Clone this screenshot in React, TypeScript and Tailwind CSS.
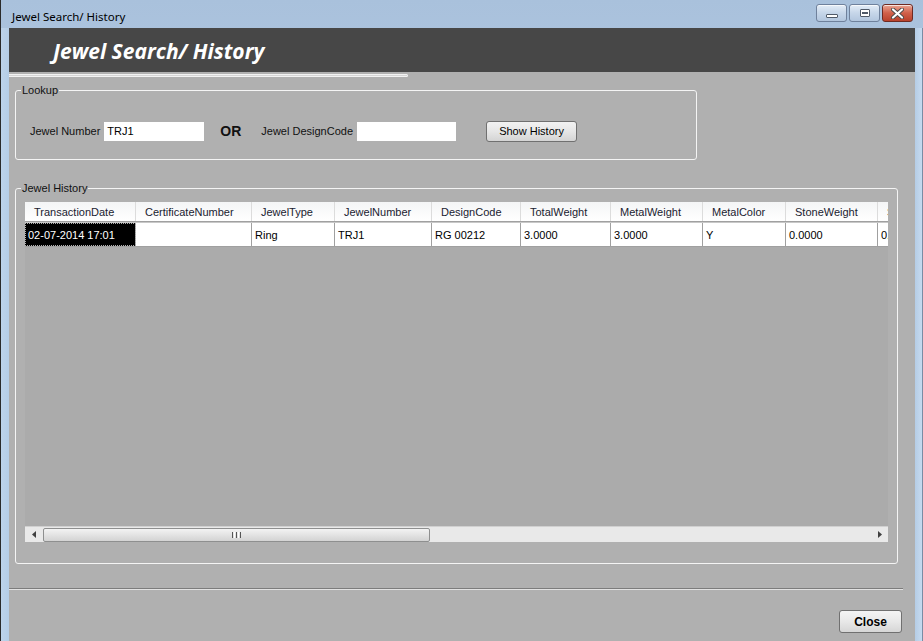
import React from "react";

const cols = [
  { name: "TransactionDate", w: 111, val: "02-07-2014 17:01" },
  { name: "CertificateNumber", w: 116, val: "" },
  { name: "JewelType", w: 83, val: "Ring" },
  { name: "JewelNumber", w: 97, val: "TRJ1" },
  { name: "DesignCode", w: 89, val: "RG 00212" },
  { name: "TotalWeight", w: 90, val: "3.0000" },
  { name: "MetalWeight", w: 92, val: "3.0000" },
  { name: "MetalColor", w: 83, val: "Y" },
  { name: "StoneWeight", w: 92, val: "0.0000" },
  { name: "StoneValue", w: 60, val: "0.0000" },
];

function CaptionButton({ kind }: { kind: "min" | "max" | "close" }) {
  const base =
    "h-[18px] flex items-center justify-center rounded-[3px] border shadow-[inset_0_1px_0_rgba(255,255,255,0.7)]";
  if (kind === "close") {
    return (
      <div className={`${base} w-[31px] border-[#6e2a22] bg-gradient-to-b from-[#e8a493] via-[#d0604a] to-[#b9412c]`}>
        <svg width="13" height="11" viewBox="0 0 13 11">
          <path d="M2 1.5 L11 9.5 M11 1.5 L2 9.5" stroke="#4a4a4a" strokeWidth="4" strokeLinecap="round" />
          <path d="M2 1.5 L11 9.5 M11 1.5 L2 9.5" stroke="#ffffff" strokeWidth="2.2" strokeLinecap="round" />
        </svg>
      </div>
    );
  }
  return (
    <div className={`${base} w-[31px] border-[#6f819c] bg-gradient-to-b from-[#e4edf7] via-[#c6d6e9] to-[#b2c6de]`}>
      {kind === "min" ? (
        <div className="w-[12px] h-[4px] mt-[6px] bg-white border border-[#505a68] rounded-[1px]" />
      ) : (
        <div className="w-[10px] h-[8px] bg-white border border-[#505a68] rounded-[1px] flex items-center justify-center">
          <div className="w-[6px] h-[2px] bg-[#505a68]" />
        </div>
      )}
    </div>
  );
}

function GroupBox({
  label,
  className,
  children,
}: {
  label: string;
  className: string;
  children: React.ReactNode;
}) {
  return (
    <div className={`relative border border-[#f4f4f4] rounded-[3px] ${className}`}>
      <span className="absolute -top-[8px] left-[5px] px-[1px] bg-[#b0b0b0] text-[11px] leading-[14px] text-[#111]">
        {label}
      </span>
      {children}
    </div>
  );
}

function Grid() {
  return (
    <div className="w-[863px] h-[340px] flex flex-col bg-[#ababab] overflow-hidden">
      <div className="flex h-[20px] bg-gradient-to-b from-[#f4f5f6] to-white border-b border-[#a0a0a0]">
        {cols.map((c) => (
          <div
            key={c.name}
            style={{ width: c.w }}
            className="shrink-0 flex items-center pl-[9px] pt-[1px] border-r border-[#dcdcdc] text-[11px] text-[#1a2230] whitespace-nowrap overflow-hidden"
          >
            {c.name}
          </div>
        ))}
      </div>
      <div className="flex h-[25px] border-t border-[#c8c8c8] border-b border-b-[#a0a0a0]">
        {cols.map((c, i) => (
          <div
            key={c.name}
            style={{ width: c.w }}
            className={`shrink-0 flex items-center pl-[3px] pt-[1px] border-r border-[#a0a0a0] text-[11px] whitespace-nowrap overflow-hidden ${
              i === 0
                ? "bg-black text-white outline-1 outline-dotted outline-offset-[-1px] outline-[#b0b0b0]"
                : "bg-white text-black"
            }`}
          >
            {c.val}
          </div>
        ))}
      </div>
      <div className="flex-1" />
      <div className="h-[16px] flex items-center bg-[#e9e9e9] border-t border-[#d0d0d0]">
        <div className="w-[18px] flex justify-center">
          <svg width="5" height="7" viewBox="0 0 5 7">
            <path d="M4 0 L0 3.5 L4 7 Z" fill="#404040" />
          </svg>
        </div>
        <div className="w-[387px] h-[14px] rounded-[2px] border border-[#8e8f8f] bg-gradient-to-b from-[#f3f3f3] via-[#e3e3e3] to-[#d3d3d3] flex items-center justify-center gap-[1px]">
          <div className="w-[1px] h-[6px] bg-[#555]" />
          <div className="w-[1px] h-[6px] bg-white" />
          <div className="w-[1px] h-[6px] bg-[#555]" />
          <div className="w-[1px] h-[6px] bg-white" />
          <div className="w-[1px] h-[6px] bg-[#555]" />
        </div>
        <div className="flex-1" />
        <div className="w-[18px] flex justify-center">
          <svg width="5" height="7" viewBox="0 0 5 7">
            <path d="M1 0 L5 3.5 L1 7 Z" fill="#404040" />
          </svg>
        </div>
      </div>
    </div>
  );
}

export default function App() {
  return (
    <div
      className="w-[923px] h-[641px] overflow-hidden flex flex-col border-l border-[#2a2a2a] bg-gradient-to-b from-[#a9c1dc] via-[#bcd2ea] to-[#c3d7ee]"
      style={{ fontFamily: '"Liberation Sans", Arial, sans-serif' }}
    >
      <div className="h-[28px] shrink-0 flex items-center pl-[11px] pr-[10px]">
        <span
          className="text-[11.5px] text-black pt-[5px]"
          style={{ fontFamily: '"Noto Sans", "Open Sans", sans-serif' }}
        >
          Jewel Search/ History
        </span>
        <div className="ml-auto flex items-start gap-[2px] -mt-[2px]">
          <CaptionButton kind="min" />
          <CaptionButton kind="max" />
          <CaptionButton kind="close" />
        </div>
      </div>
      <div className="flex-1 flex">
        <div className="w-[8px] bg-gradient-to-r from-[#bdd3ea] to-[#b5cde6]" />
        <div className="w-[906px] flex flex-col bg-[#b0b0b0]">
          <div className="h-[44px] shrink-0 bg-[#474747] flex items-center pl-[44px] pt-[4px]">
            <span
              className="text-[21px] font-bold italic text-white"
              style={{ fontFamily: '"Open Sans", "Noto Sans", sans-serif' }}
            >
              Jewel Search/ History
            </span>
          </div>
          <div className="mt-[2px] w-[399px] h-[3px] border-y border-r border-[#f2f2f2] rounded-r-[3px] bg-[#d6d6d6]" />

          <GroupBox label="Lookup" className="mt-[13px] ml-[6px] w-[682px] h-[70px] shrink-0">
            <div className="flex items-center pt-[30px] pl-[14px]">
              <span className="text-[11px] text-[#111]">Jewel Number</span>
              <div className="ml-[4px] w-[100px] h-[19px] bg-white flex items-center pl-[3px] text-[11px] text-black">
                TRJ1
              </div>
              <span className="ml-[16px] text-[14px] font-bold text-[#111]">OR</span>
              <span className="ml-[20px] text-[11px] text-[#111]">Jewel DesignCode</span>
              <div className="ml-[4px] w-[99px] h-[19px] bg-white" />
              <button className="ml-[30px] -mt-[1px] w-[91px] h-[21px] rounded-[3px] border border-[#707070] bg-gradient-to-b from-[#f2f2f2] via-[#e6e6e6] to-[#d4d4d4] text-[11px] text-black">
                Show History
              </button>
            </div>
          </GroupBox>

          <GroupBox label="Jewel History" className="mt-[28px] ml-[6px] w-[883px] h-[376px] shrink-0">
            <div className="pt-[13px] pl-[9px]">
              <Grid />
            </div>
          </GroupBox>

          <div className="mt-[24px] w-[894px] h-[2px] border-t border-[#7c7c7c] bg-[#e2e2e2]" />

          <div className="flex justify-end pr-[13px] mt-[20px]">
            <button className="w-[63px] h-[23px] rounded-[3px] border border-[#707070] bg-gradient-to-b from-[#f4f4f4] via-[#e8e8e8] to-[#d6d6d6] text-[12px] font-bold text-black">
              Close
            </button>
          </div>
        </div>
        <div className="w-[8px] bg-gradient-to-r from-[#b5cde6] to-[#c6daef] border-r border-[#7a8ca4]" />
      </div>
    </div>
  );
}
